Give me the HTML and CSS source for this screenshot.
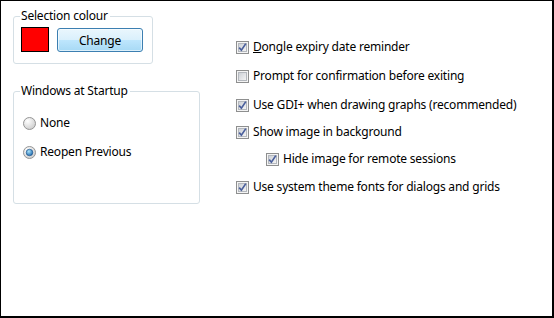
FILE: index.html
```html
<!DOCTYPE html>
<html lang="en">
<head>
  <meta charset="UTF-8" />
  <title>Options</title>
  <link rel="stylesheet" href="styles.css">
</head>
<body>
  <svg class="defs" width="0" height="0">
    <defs>
      <linearGradient id="boxfill" x1="0" y1="0" x2="1" y2="1">
        <stop offset="0" stop-color="#cbcfd5"/>
        <stop offset="1" stop-color="#f6f6f6"/>
      </linearGradient>
      <radialGradient id="radfill" cx="0.35" cy="0.3" r="0.8">
        <stop offset="0" stop-color="#ffffff"/>
        <stop offset="1" stop-color="#c9c9c9"/>
      </radialGradient>
      <radialGradient id="dotfill" cx="0.4" cy="0.35" r="0.7">
        <stop offset="0" stop-color="#a9e3fb"/>
        <stop offset="1" stop-color="#1762a8"/>
      </radialGradient>
      <symbol id="cb" viewBox="0 0 13 13">
        <rect x="0.5" y="0.5" width="12" height="12" fill="#f4f4f4" stroke="#8e8f8f"/>
        <rect x="2.5" y="2.5" width="8" height="8" fill="url(#boxfill)" stroke="#b4b8be"/>
      </symbol>
      <symbol id="cbon" viewBox="0 0 13 13">
        <use href="#cb"/>
        <path d="M3.2 6.6 L5.4 9.2 L9.8 2.6" fill="none" stroke="#4a5f9c" stroke-width="1.7"/>
      </symbol>
      <symbol id="rb" viewBox="0 0 13 13">
        <circle cx="6.5" cy="6.5" r="6" fill="url(#radfill)" stroke="#959595"/>
      </symbol>
      <symbol id="rbon" viewBox="0 0 13 13">
        <use href="#rb"/>
        <circle cx="6.5" cy="6.5" r="3.3" fill="url(#dotfill)" stroke="#1b4f87" stroke-width="0.6"/>
      </symbol>
    </defs>
  </svg>

  <div class="dialog">
    <div class="left-col">
      <fieldset class="group group-colour">
        <legend>Selection colour</legend>
        <div class="colour-row">
          <span class="swatch"></span>
          <button class="btn">Change</button>
        </div>
      </fieldset>

      <fieldset class="group group-startup">
        <legend>Windows at Startup</legend>
        <div class="radio-list">
          <label class="radio"><svg width="13" height="13"><use href="#rb"/></svg>None</label>
          <label class="radio"><svg width="13" height="13"><use href="#rbon"/></svg>Reopen Previous</label>
        </div>
      </fieldset>
    </div>

    <div class="right-col">
      <label class="check"><svg width="13" height="13"><use href="#cbon"/></svg><span><u>D</u>ongle expiry date reminder</span></label>
      <label class="check"><svg width="13" height="13"><use href="#cb"/></svg>Prompt for confirmation before exiting</label>
      <label class="check tight"><svg width="13" height="13"><use href="#cbon"/></svg>Use GDI+ when drawing graphs (recommended)</label>
      <label class="check tight"><svg width="13" height="13"><use href="#cbon"/></svg>Show image in background</label>
      <label class="check sub"><svg width="13" height="13"><use href="#cbon"/></svg>Hide image for remote sessions</label>
      <label class="check"><svg width="13" height="13"><use href="#cbon"/></svg>Use system theme fonts for dialogs and grids</label>
    </div>
  </div>
</body>
</html>
```
FILE: styles.css
```css
html, body {
  margin: 0;
  padding: 0;
  background: #fff;
  font-family: 'Noto Sans', 'Open Sans', Arial, sans-serif;
  font-size: 12px;
  letter-spacing: -0.2px;
  color: #000;
}
.defs {
  position: absolute;
  width: 0;
  height: 0;
}
.dialog {
  width: 554px;
  height: 318px;
  box-sizing: border-box;
  border-style: solid;
  border-color: #000;
  border-width: 1px 2px 2px 1px;
  display: flex;
  padding: 0 0 0 12px;
}
/* -- LEFT -- */
.left-col {
  width: 187px;
  display: flex;
  flex-direction: column;
}
.group {
  margin: 0;
  border: 1px solid #d5dfe5;
  border-radius: 3px;
  padding: 0;
}
.group legend {
  padding: 0 2px 0 1px;
  margin-left: 6px;
  line-height: 16px;
}
.group-colour {
  width: 140px;
  box-sizing: border-box;
  height: 56px;
  margin-top: 7px;
}
.colour-row {
  display: flex;
  align-items: center;
  padding: 3px 0 0 7px;
  gap: 8px;
}
.swatch {
  width: 26px;
  height: 23px;
  background: #ff0000;
  border: 1px solid #000;
}
.btn {
  width: 86px;
  height: 24px;
  margin-top: 1px;
  border: 1px solid #3c7fb1;
  border-radius: 3px;
  background: linear-gradient(#eaf6fd 0%, #d9f0fc 50%, #bee6fd 50%, #a7d9f5 100%);
  box-shadow: inset 0 0 0 1px #ffffff99;
  font-family: inherit;
  font-size: 12px;
  letter-spacing: inherit;
  color: #000;
  padding: 0;
}
.group-startup {
  width: 187px;
  box-sizing: border-box;
  height: 121px;
  margin-top: 19px;
}
.radio-list {
  padding: 16px 0 0 9px;
  display: flex;
  flex-direction: column;
  gap: 13px;
}
.radio {
  display: flex;
  align-items: center;
  gap: 4px;
  line-height: 16px;
}
/* -- RIGHT -- */
.right-col {
  margin-left: 36px;
  padding-top: 38px;
  display: flex;
  flex-direction: column;
}
.check {
  display: flex;
  align-items: center;
  gap: 4px;
  line-height: 16px;
  margin-bottom: 13px;
}
.check.tight {
  margin-bottom: 11px;
}
.check.sub {
  margin-left: 30px;
  margin-bottom: 12px;
}
.check svg, .radio svg {
  flex-shrink: 0;
}
```
